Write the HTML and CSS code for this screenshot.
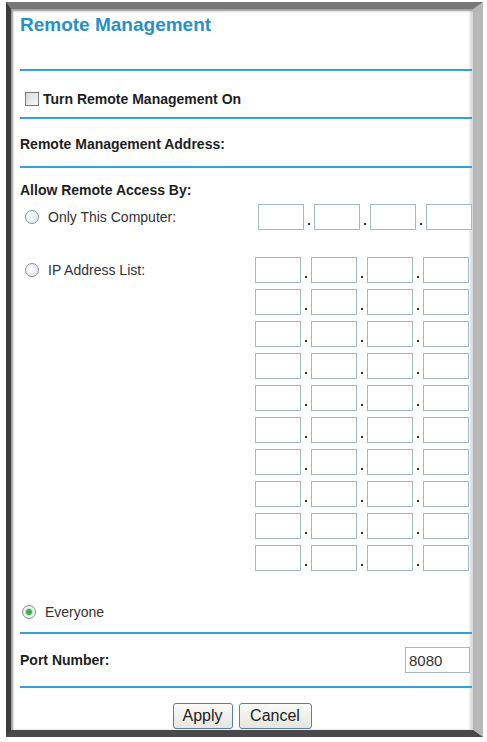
FILE: index.html
```html
<!DOCTYPE html>
<html lang="en">
<head>
  <meta charset="UTF-8">
  <title>Remote Management</title>
  <link rel="stylesheet" href="styles.css">
</head>
<body>

<div class="window">
  <div class="page">
    <div class="title">Remote Management</div>
    <div class="rule"></div>

    <div class="row check-row">
      <input type="checkbox" class="check">
      <span class="label">Turn Remote Management On</span>
    </div>
    <div class="rule"></div>

    <div class="row addr-row"><span class="label">Remote Management Address:</span></div>
    <div class="rule"></div>

    <div class="allow label">Allow Remote Access By:</div>

    <div class="access-row">
      <label class="option"><input type="radio" name="access" class="radio">Only This Computer:</label>
      <div class="ip">
        <input type="text" class="octet"><span class="dot"></span>
        <input type="text" class="octet"><span class="dot"></span>
        <input type="text" class="octet"><span class="dot"></span>
        <input type="text" class="octet">
      </div>
    </div>

    <div class="access-row list-row">
      <label class="option"><input type="radio" name="access" class="radio">IP Address List:</label>
      <div class="ip-list" id="ipList"></div>
    </div>

    <label class="option everyone"><input type="radio" name="access" class="radio" checked>Everyone</label>
    <div class="rule"></div>

    <div class="row port-row">
      <span class="label">Port Number:</span>
      <input type="text" class="port" value="8080">
    </div>
    <div class="rule"></div>

    <div class="buttons">
      <button class="btn apply">Apply</button>
      <button class="btn cancel">Cancel</button>
    </div>
  </div>
</div>

<script>
// ten rows of ip boxes for the address list
const list = document.getElementById('ipList');
for (let i = 0; i < 10; i++) {
  const row = document.createElement('div');
  row.className = 'ip';
  for (let j = 0; j < 4; j++) {
    const box = document.createElement('input');
    box.type = 'text';
    box.className = 'octet';
    row.appendChild(box);
    if (j < 3) {
      const dot = document.createElement('span');
      dot.className = 'dot';
      row.appendChild(dot);
    }
  }
  list.appendChild(row);
}
</script>

</body>
</html>
```

FILE: styles.css
```css
body {
  margin: 0;
  background: #fff;
  font-family: "Liberation Sans", Arial, sans-serif;
  color: #222;
}
.window {
  margin: 2px 0 0 6px;
  width: 477px;
  height: 735px;
  box-sizing: border-box;
  border-style: solid;
  border-width: 7px 10px 7px 5px;
  border-color: #777 #b8b8b8 #4a4a4a #3c3c3c;
  box-shadow: inset 2px 2px 2px #9a9a9a, inset -3px 0 3px #d8d8d8;
}
.page {
  padding: 0 1px 0 9px;
}
.title {
  padding-top: 6px;
  height: 54px;
  line-height: 20px;
  font-size: 19px;
  font-weight: bold;
  color: #2690cb;
}
.rule {
  height: 2px;
  background: #34a2d9;
}
.row {
  display: flex;
  align-items: center;
  box-sizing: border-box;
}
.label {
  font-size: 14px;
  font-weight: bold;
  color: #1e1e1e;
}
.check-row {
  height: 46px;
  padding-top: 10px;
  padding-left: 5px;
}
.check {
  appearance: none;
  margin: 0 4px 0 0;
  width: 14px;
  height: 14px;
  border: 1px solid #7a7a7a;
  background: linear-gradient(135deg, #d8d8d8, #f8f8f8);
}
.addr-row {
  height: 47px;
  padding-top: 3px;
}
.allow {
  padding-top: 14px;
  line-height: 17px;
  height: 17px;
}
.access-row {
  display: flex;
  justify-content: space-between;
  align-items: flex-start;
  margin-top: 5px;
}
.list-row {
  margin-top: 27px;
}
.option {
  display: flex;
  align-items: center;
  height: 26px;
  padding-left: 5px;
  font-size: 14px;
  color: #333;
}
.radio {
  appearance: none;
  margin: 0 9px 0 0;
  width: 14px;
  height: 14px;
  border-radius: 50%;
  border: 1px solid #8596ab;
  background: radial-gradient(circle at 40% 40%, #fff, #dcdcdc);
}
.radio:checked {
  background: radial-gradient(circle, #3fae48 0 2.5px, #bfe3c1 3.5px, #f4f4f4 4.5px, #d8d8d8);
}
.ip {
  display: flex;
  align-items: flex-end;
}
.ip-list {
  display: flex;
  flex-direction: column;
  gap: 6px;
  margin-right: 3px;
}
.octet {
  width: 46px;
  height: 26px;
  box-sizing: border-box;
  margin: 0;
  border: 1px solid #a3b7cf;
  background: #fff;
}
.dot {
  width: 2px;
  height: 2px;
  background: #333;
  margin: 0 4px 5px;
}
.everyone {
  margin-top: 33px;
  height: 16px;
  padding-left: 2px;
  margin-bottom: 12px;
}
.port-row {
  height: 52px;
  padding-left: 0;
  justify-content: space-between;
  padding-right: 2px;
}
.port {
  width: 65px;
  height: 26px;
  box-sizing: border-box;
  margin: 0;
  padding: 0 3px;
  border: 1px solid #a8b8c8;
  font-family: "Liberation Sans", Arial, sans-serif;
  font-size: 15px;
  color: #333;
}
.buttons {
  display: flex;
  justify-content: center;
  gap: 6px;
  padding-top: 15px;
  padding-right: 8px;
}
.btn {
  height: 26px;
  padding: 0 4px;
  border: 1px solid #5b7ea6;
  border-radius: 3px;
  background: linear-gradient(#fbfbf8, #e6e5de);
  font-family: "Liberation Sans", Arial, sans-serif;
  font-size: 16px;
  color: #222;
}
.apply { width: 60px; }
.cancel { width: 73px; }
```
